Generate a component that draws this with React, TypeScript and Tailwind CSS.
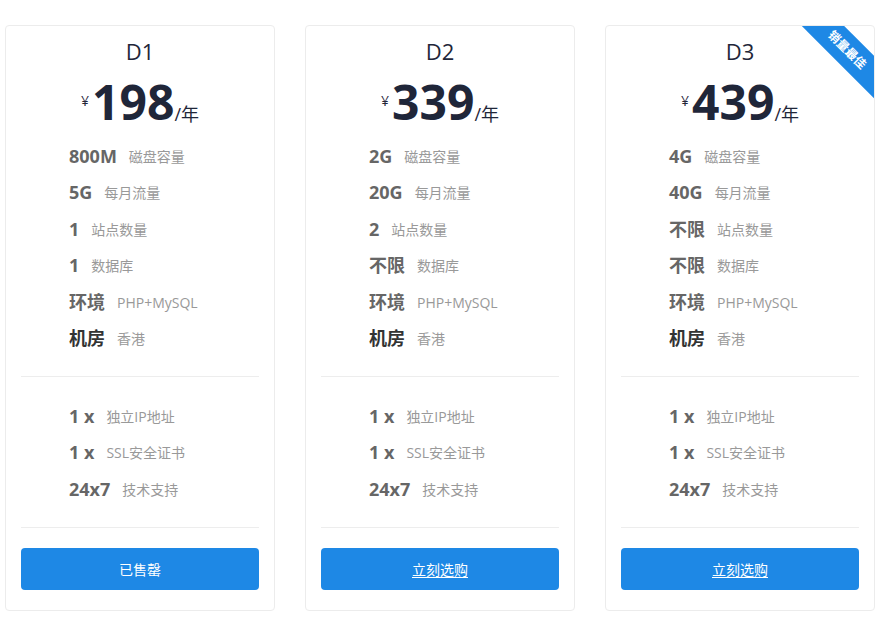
import React from "react";

type Row = { value: string; label: string; dark?: boolean };

type Plan = {
  name: string;
  price: string;
  specs: Row[];
  extras: Row[];
  action: string;
  soldOut?: boolean;
  hot?: boolean;
};

const font = { fontFamily: '"Open Sans", "Noto Sans CJK SC", sans-serif' };

const extras: Row[] = [
  { value: "1 x", label: "独立IP地址" },
  { value: "1 x", label: "SSL安全证书" },
  { value: "24x7", label: "技术支持" },
];

const plans: Plan[] = [
  {
    name: "D1",
    price: "198",
    specs: [
      { value: "800M", label: "磁盘容量" },
      { value: "5G", label: "每月流量" },
      { value: "1", label: "站点数量" },
      { value: "1", label: "数据库" },
      { value: "环境", label: "PHP+MySQL" },
      { value: "机房", label: "香港", dark: true },
    ],
    extras,
    action: "已售罄",
    soldOut: true,
  },
  {
    name: "D2",
    price: "339",
    specs: [
      { value: "2G", label: "磁盘容量" },
      { value: "20G", label: "每月流量" },
      { value: "2", label: "站点数量" },
      { value: "不限", label: "数据库" },
      { value: "环境", label: "PHP+MySQL" },
      { value: "机房", label: "香港", dark: true },
    ],
    extras,
    action: "立刻选购",
  },
  {
    name: "D3",
    price: "439",
    specs: [
      { value: "4G", label: "磁盘容量" },
      { value: "40G", label: "每月流量" },
      { value: "不限", label: "站点数量" },
      { value: "不限", label: "数据库" },
      { value: "环境", label: "PHP+MySQL" },
      { value: "机房", label: "香港", dark: true },
    ],
    extras,
    action: "立刻选购",
    hot: true,
  },
];

function FeatureRow({ row }: { row: Row }) {
  return (
    <div className="flex h-[36.5px] items-center gap-3">
      <span
        className={
          "text-[18px] font-bold " + (row.dark ? "text-[#333333]" : "text-[#666666]")
        }
      >
        {row.value}
      </span>
      <span className="text-[14px] text-[#999999]">{row.label}</span>
    </div>
  );
}

function PlanCard({ plan }: { plan: Plan }) {
  return (
    <div className="relative flex h-[586px] w-[270px] flex-col overflow-hidden rounded-[4px] border border-[#ececec] bg-white px-[15px] pt-[10px] pb-[20px]">
      {/* 角标 */}
      {plan.hot && (
        <div className="absolute left-[181px] top-[9px] flex h-[30px] w-[120px] rotate-45 items-center justify-center bg-[#1e88e5]">
          <span className="text-[12px] font-bold text-white">销量最佳</span>
        </div>
      )}

      <div className="text-center text-[22px] leading-[30px] text-[#1f2639]">{plan.name}</div>

      {/* 价格 */}
      <div className="mt-[8px] flex h-[56px] items-end justify-center text-[#1f2639]">
        <span className="mb-[19px] mr-[3px] text-[14px]">¥</span>
        <span className="text-[48px] font-bold leading-[56px]">{plan.price}</span>
        <span className="mb-[4px] text-[18px] leading-[24px]">/年</span>
      </div>

      <div className="mt-[8px] pl-[48px]">
        {plan.specs.map((row, i) => (
          <FeatureRow key={i} row={row} />
        ))}
      </div>

      <div className="mt-[19px] h-px bg-[#ededed]" />

      <div className="mt-[21px] pl-[48px]">
        {plan.extras.map((row, i) => (
          <FeatureRow key={i} row={row} />
        ))}
      </div>

      <div className="mt-[20px] h-px bg-[#ededed]" />

      <button
        className={
          "mt-[20px] h-[42px] w-full rounded-[4px] bg-[#1e88e5] text-[14px] text-white " +
          (plan.soldOut ? "" : "underline underline-offset-2")
        }
      >
        {plan.action}
      </button>
    </div>
  );
}

export default function App() {
  return (
    <div style={font} className="h-[630px] w-[880px] bg-white px-[5px] pt-[25px]">
      <div className="flex gap-[30px]">
        {plans.map((plan) => (
          <PlanCard key={plan.name} plan={plan} />
        ))}
      </div>
    </div>
  );
}
